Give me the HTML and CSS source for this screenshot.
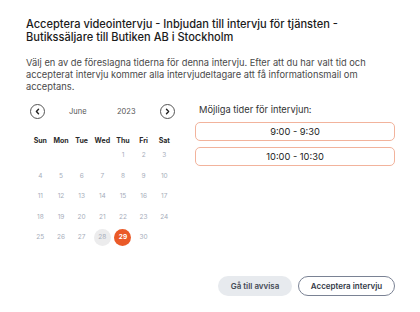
FILE: index.html
```html
<!DOCTYPE html>
<html lang="sv">
<head>
<meta charset="utf-8">
<link rel="stylesheet" href="styles.css">
</head>
<body>
<div class="dialog">
  <h1 class="title">Acceptera videointervju - Inbjudan till intervju för tjänsten - Butikssäljare till Butiken AB i Stockholm</h1>
  <p class="intro">Välj en av de föreslagna tiderna för denna intervju. Efter att du har valt tid och accepterat intervju kommer alla intervjudeltagare att få informationsmail om acceptans.</p>
  <div class="content">
    <div class="calendar">
      <div class="cal-nav">
        <button class="nav-btn" aria-label="Föregående">
          <svg width="7" height="7" viewBox="0 0 7 7"><path d="M4.5 1.2 L2.4 3.5 L4.5 5.8" fill="none" stroke="#222" stroke-width="1.4" stroke-linecap="round" stroke-linejoin="round"/></svg>
        </button>
        <span class="month">June</span>
        <span class="year">2023</span>
        <button class="nav-btn" aria-label="Nästa">
          <svg width="7" height="7" viewBox="0 0 7 7"><path d="M2.5 1.2 L4.6 3.5 L2.5 5.8" fill="none" stroke="#222" stroke-width="1.4" stroke-linecap="round" stroke-linejoin="round"/></svg>
        </button>
      </div>
      <div class="grid">
        <span class="wd">Sun</span><span class="wd">Mon</span><span class="wd">Tue</span><span class="wd">Wed</span><span class="wd">Thu</span><span class="wd">Fri</span><span class="wd">Sat</span>
        <span class="d"></span><span class="d"></span><span class="d"></span><span class="d"></span><span class="d">1</span><span class="d">2</span><span class="d">3</span>
        <span class="d">4</span><span class="d">5</span><span class="d">6</span><span class="d">7</span><span class="d">8</span><span class="d">9</span><span class="d">10</span>
        <span class="d">11</span><span class="d">12</span><span class="d">13</span><span class="d">14</span><span class="d">15</span><span class="d">16</span><span class="d">17</span>
        <span class="d">18</span><span class="d">19</span><span class="d">20</span><span class="d">21</span><span class="d">22</span><span class="d">23</span><span class="d">24</span>
        <span class="d">25</span><span class="d">26</span><span class="d">27</span><span class="d"><i class="today">28</i></span><span class="d"><i class="sel">29</i></span><span class="d">30</span><span class="d"></span>
      </div>
    </div>
    <div class="times">
      <div class="times-label">Möjliga tider för intervjun:</div>
      <button class="slot">9:00 - 9:30</button>
      <button class="slot">10:00 - 10:30</button>
    </div>
  </div>
  <div class="actions">
    <button class="btn btn-grey">Gå till avvisa</button>
    <button class="btn btn-outline">Acceptera intervju</button>
  </div>
</div>
</body>
</html>
```
FILE: styles.css
```css
* { box-sizing: border-box; }
html, body { margin: 0; padding: 0; background: #fff; }
body { font-family: "Inter", "Open Sans", "Liberation Sans", sans-serif; color: #1d1d1f; width: 420px; height: 312px; overflow: hidden; }
.dialog { padding: 18px 25px 0 26px; }
.title { margin: 0; font-size: 11.05px; line-height: 13px; font-weight: 500; color: #1b1b1b; }
.intro { margin: 13px 0 0; font-size: 9.3px; line-height: 12px; color: #4a4a4a; }
.content { display: flex; margin-top: 11px; }
.calendar { width: 145px; margin-left: 4px; }
.cal-nav { display: flex; align-items: center; height: 15px; }
.nav-btn { width: 15px; height: 15px; border-radius: 50%; border: 1px solid #555; background: #fff; padding: 0; display: flex; align-items: center; justify-content: center; }
.month { font-size: 7.5px; color: #555; margin-left: 24px; width: 40px; }
.year { font-size: 7.5px; color: #555; margin-left: 8px; margin-right: auto; }
.grid { display: grid; grid-template-columns: repeat(7, 20.67px); grid-template-rows: 10px; grid-auto-rows: 20.5px; margin-top: 16px; }
.wd { font-size: 7px; font-weight: 700; color: #2a2a2a; display: flex; align-items: center; justify-content: center; height: 10px; }
.d { font-size: 6.5px; color: #a6adba; display: flex; align-items: center; justify-content: center; }
.d i { font-style: normal; width: 17px; height: 17px; border-radius: 50%; display: flex; align-items: center; justify-content: center; }
.today { background: #ececed; color: #a6adba; }
.sel { background: #ea5a28; color: #fff; font-weight: 700; }
.times { width: 200px; margin-left: 20px; }
.times-label { font-size: 9.3px; color: #333; margin: -1px 0 0 4px; height: 14px; line-height: 14px; }
.slot { display: block; width: 200px; height: 19px; margin-top: 6px; border: 1px solid #f2b39c; border-radius: 5px; background: #fff; font-family: inherit; font-size: 9.3px; color: #222; padding: 0; }
.slot:first-of-type { margin-top: 5px; }
.actions { display: flex; justify-content: flex-end; gap: 6px; margin-top: 28px; }
.btn { height: 20px; border-radius: 10px; font-family: inherit; font-size: 8px; font-weight: 600; padding: 0; }
.btn-grey { width: 74px; background: #e7eaee; border: none; color: #444a55; }
.btn-outline { width: 97px; background: #fff; border: 1px solid #7a8294; color: #343a48; }
```
